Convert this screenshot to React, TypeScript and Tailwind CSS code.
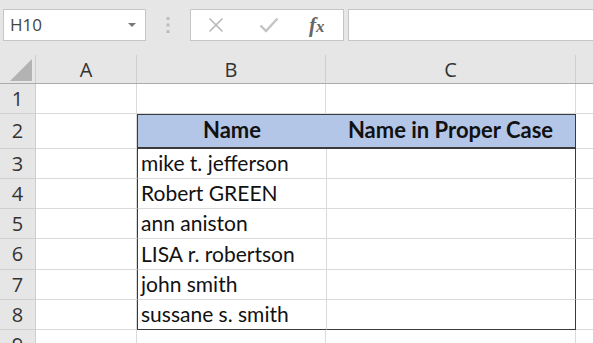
import React from "react";

const rows: { n: number; h: number; b?: string; c?: string; header?: boolean }[] = [
  { n: 1, h: 30 },
  { n: 2, h: 35, b: "Name", c: "Name in Proper Case", header: true },
  { n: 3, h: 30, b: "mike t. jefferson" },
  { n: 4, h: 30, b: "Robert GREEN" },
  { n: 5, h: 30, b: "ann aniston" },
  { n: 6, h: 31, b: "LISA r. robertson" },
  { n: 7, h: 30, b: "john smith" },
  { n: 8, h: 30, b: "sussane s. smith" },
  { n: 9, h: 30 },
];

const cellFont = { fontFamily: "Lato, 'Open Sans', sans-serif" };

export default function App() {
  return (
    <div className="w-[593px] h-[343px] overflow-hidden bg-white relative" style={cellFont}>
      {/* Formula bar */}
      <div className="h-[55px] bg-[#e6e6e6] flex items-start pt-[9px] pl-[3px]">
        <div className="w-[143px] h-[32px] bg-white border border-[#c6c6c6] flex items-center justify-between pl-[6px] pr-[9px]">
          <span className="text-[17px] text-[#444]" style={{ fontFamily: "'Open Sans', sans-serif" }}>H10</span>
          <svg width="8" height="4" viewBox="0 0 8 4"><path d="M0 0 L8 0 L4 4 Z" fill="#777" /></svg>
        </div>
        <div className="w-[44px] h-[32px] flex items-center justify-center">
          <svg width="4" height="16" viewBox="0 0 4 16">
            <rect x="0.5" y="0" width="3" height="3" fill="#bdbdbd" />
            <rect x="0.5" y="6.5" width="3" height="3" fill="#bdbdbd" />
            <rect x="0.5" y="13" width="3" height="3" fill="#bdbdbd" />
          </svg>
        </div>
        <div className="w-[154px] h-[32px] bg-white border border-[#c6c6c6] flex items-center">
          <svg className="ml-[17px]" width="16" height="16" viewBox="0 0 16 16">
            <path d="M1.5 1.5 L14.5 14.5 M14.5 1.5 L1.5 14.5" stroke="#b8b8b8" strokeWidth="1.6" fill="none" />
          </svg>
          <svg className="ml-[35px]" width="20" height="16" viewBox="0 0 20 16">
            <path d="M1.5 8.5 L7 14 L18.5 1.5" stroke="#c4c4c4" strokeWidth="2.4" fill="none" />
          </svg>
          <span className="ml-[30px] text-[21px] italic font-semibold text-[#666] leading-none" style={{ fontFamily: "'Liberation Serif', serif" }}>
            f<span className="text-[17px]">x</span>
          </span>
        </div>
        <div className="ml-[4px] flex-1 h-[32px] bg-white border border-[#c6c6c6] border-r-0" />
      </div>

      {/* Column headers */}
      <div className="flex h-[29px] bg-[#e6e6e6] border-b border-[#ababab]">
        <div className="w-[36px] border-r border-[#cfcfcf] flex items-end justify-end pr-[3px] pb-[2px]">
          <svg width="22" height="22" viewBox="0 0 22 22"><path d="M22 0 L22 22 L0 22 Z" fill="#b3b3b3" /></svg>
        </div>
        {[
          { l: "A", w: 101 },
          { l: "B", w: 189 },
          { l: "C", w: 250 },
        ].map((c) => (
          <div
            key={c.l}
            className="border-r border-[#cfcfcf] flex items-center justify-center text-[20px] text-[#333] pt-[2px]"
            style={{ width: c.w, fontFamily: "'Open Sans', sans-serif" }}
          >
            {c.l}
          </div>
        ))}
        <div className="flex-1" />
      </div>

      {/* Rows */}
      <div className="relative">
        {rows.map((r) => (
          <div key={r.n} className="flex" style={{ height: r.h }}>
            <div className="w-[36px] bg-[#e6e6e6] border-r border-b border-[#cfcfcf] flex items-center justify-center text-[20px] text-[#333]" style={{ fontFamily: "'Open Sans', sans-serif" }}>
              {r.n}
            </div>
            <div className="w-[101px] border-r border-b border-[#dadada]" />
            {r.header ? (
              <>
                <div className="w-[189px] bg-[#b4c6e7] border-t border-l border-b-2 border-[#3a3a3a] flex items-end justify-center pb-[3px] text-[22px] font-bold text-[#111] leading-[28px]">
                  {r.b}
                </div>
                <div className="w-[250px] bg-[#b4c6e7] border-t border-r border-b-2 border-[#3a3a3a] flex items-end justify-center pb-[3px] text-[22px] font-bold text-[#111] leading-[28px] whitespace-nowrap">
                  {r.c}
                </div>
              </>
            ) : r.b ? (
              <>
                <div className={`w-[189px] border-l border-[#3a3a3a] border-b ${r.n === 8 ? "border-b-[#3a3a3a]" : "border-b-[#dadada]"} flex items-end pl-[3px] pb-[1px] text-[21px] text-[#111] leading-[28px] whitespace-nowrap`}>
                  {r.b}
                </div>
                <div className={`w-[250px] border-l border-l-[#dadada] border-r border-r-[#3a3a3a] border-b ${r.n === 8 ? "border-b-[#3a3a3a]" : "border-b-[#dadada]"}`} />
              </>
            ) : (
              <>
                <div className="w-[189px] border-r border-b border-[#dadada]" />
                <div className="w-[250px] border-r border-b border-[#dadada]" />
              </>
            )}
            <div className="flex-1 border-b border-[#dadada]" />
          </div>
        ))}
      </div>
    </div>
  );
}
